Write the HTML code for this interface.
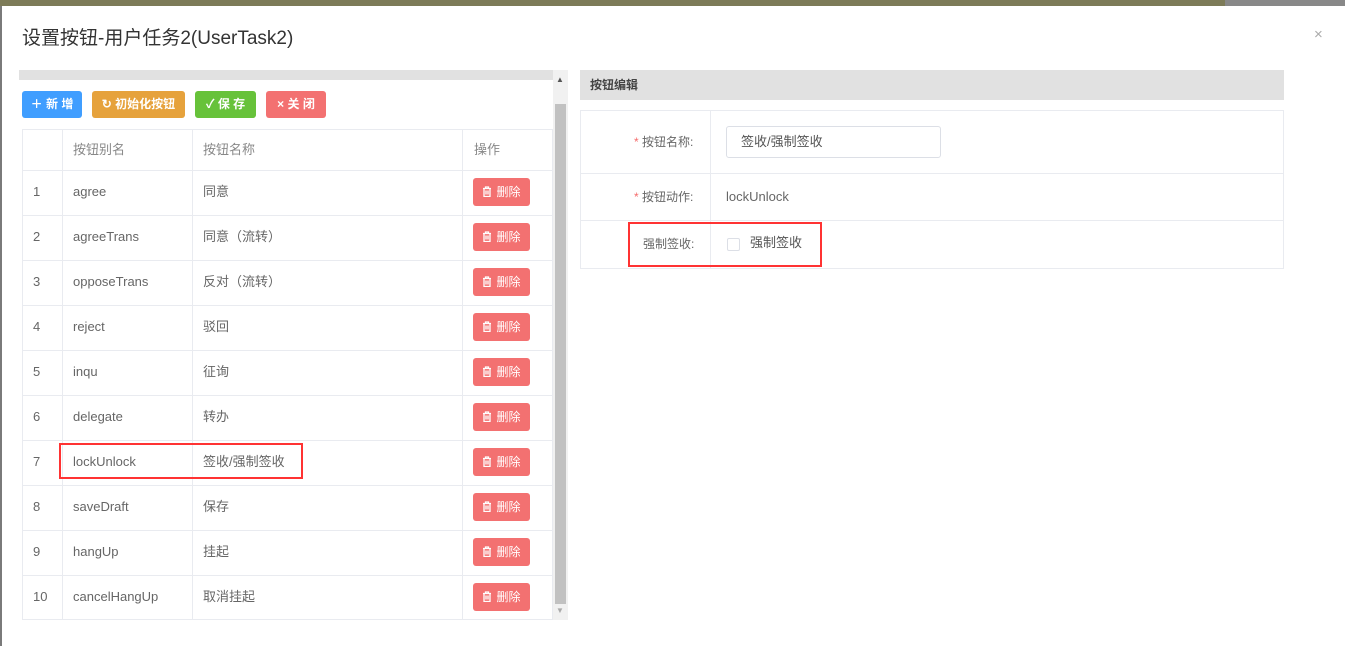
<!DOCTYPE html>
<html><head><meta charset="utf-8"><style>
*{margin:0;padding:0;box-sizing:border-box}
body{width:1345px;height:627px;overflow:hidden;background:#7a7a7a;font-family:"Liberation Sans","Noto Sans CJK SC",sans-serif;position:relative}
.a{position:absolute}
.modal{left:2px;top:6px;width:1343px;height:640px;background:#fff}
.t{font-size:13px;color:#666}
.c{position:absolute;font-size:13px;color:#666;height:45px;line-height:44px;white-space:nowrap}
.btn{position:absolute;top:91px;height:27px;border-radius:3px;color:#fff;font-size:12px;font-weight:bold;line-height:27px;text-align:center}
.del{position:absolute;left:473px;width:57px;height:28px;background:#f37171;border-radius:3px;color:#fff;font-size:12px;line-height:28px;text-align:center}
.hl{background:#e9ebf0}
.lb{position:absolute;font-size:12px;color:#666;line-height:16px}
</style></head><body>
<div class="a" style="left:0;top:0;width:1345px;height:6px;background:#7d7b58"></div>
<div class="a" style="left:1225px;top:0;width:120px;height:6px;background:#888"></div>
<div class="a modal"></div>
<div class="a" style="left:22px;top:26px;font-size:19px;color:#333;line-height:26px">设置按钮-用户任务2(UserTask2)</div>
<div class="a" style="left:1314px;top:26px;font-size:15px;color:#aaa">×</div>
<div class="a" style="left:19px;top:70px;width:534px;height:10px;background:#e1e1e1"></div>
<div class="a" style="left:553px;top:70px;width:15px;height:550px;background:#f1f1f1"></div>
<div class="a" style="left:555px;top:104px;width:11px;height:500px;background:#c1c1c1"></div>
<div class="a" style="left:556px;top:75px;font-size:8px;color:#555">▲</div>
<div class="a" style="left:556px;top:606px;font-size:8px;color:#aaa">▼</div>
<div class="btn" style="left:22px;width:60px;background:#409eff">＋ 新 增</div>
<div class="btn" style="left:92px;width:93px;background:#e6a23c">↻ 初始化按钮</div>
<div class="btn" style="left:195px;width:61px;background:#67c23a">✓ 保 存</div>
<div class="btn" style="left:266px;width:60px;background:#f37171">× 关 闭</div>
<div class="a" style="left:22px;top:129px;width:531px;height:491px;border:1px solid #e9ebf0"></div>
<div class="a hl" style="left:62px;top:130px;width:1px;height:490px"></div>
<div class="a hl" style="left:192px;top:130px;width:1px;height:490px"></div>
<div class="a hl" style="left:462px;top:130px;width:1px;height:490px"></div>
<div class="c" style="left:73px;top:128px;color:#888">按钮别名</div>
<div class="c" style="left:203px;top:128px;color:#888">按钮名称</div>
<div class="c" style="left:474px;top:128px;color:#888">操作</div>
<div id="rows"></div>
<script>
var d=[["agree","同意"],["agreeTrans","同意（流转）"],["opposeTrans","反对（流转）"],["reject","驳回"],["inqu","征询"],["delegate","转办"],["lockUnlock","签收/强制签收"],["saveDraft","保存"],["hangUp","挂起"],["cancelHangUp","取消挂起"]];
var h="";
var ic='<svg width="10" height="11" viewBox="0 0 10 11" style="vertical-align:-1px;margin-right:4px"><path d="M1 2.5h8M3.5 2.5V1h3v1.5M2 2.5v8h6v-8M4 4.5v4M6 4.5v4" stroke="#fff" stroke-width="1.3" fill="none"/></svg>';
for(var i=0;i<10;i++){var y=170+45*i;
h+='<div class="a hl" style="left:23px;top:'+y+'px;width:530px;height:1px"></div>';
h+='<div class="c" style="left:33px;top:'+y+'px">'+(i+1)+'</div>';
h+='<div class="c" style="left:73px;top:'+y+'px">'+d[i][0]+'</div>';
h+='<div class="c" style="left:203px;top:'+y+'px">'+d[i][1]+'</div>';
h+='<div class="del" style="top:'+(y+8)+'px">'+ic+'删除</div>';}
document.getElementById("rows").innerHTML=h;
</script>
<div class="a" style="left:59px;top:443px;width:244px;height:36px;border:2px solid #f33"></div>
<div class="a" style="left:580px;top:70px;width:704px;height:30px;background:#e1e1e1;font-size:12px;color:#444;font-weight:bold;padding:0 10px;line-height:30px">按钮编辑</div>
<div class="a" style="left:580px;top:110px;width:704px;height:159px;border:1px solid #e9ebf0"></div>
<div class="a hl" style="left:710px;top:110px;width:1px;height:158px"></div>
<div class="a hl" style="left:581px;top:173px;width:702px;height:1px"></div>
<div class="a hl" style="left:581px;top:220px;width:702px;height:1px"></div>
<div class="lb" style="left:634px;top:134px"><span style="color:#f56c6c">*</span> 按钮名称:</div>
<div class="a" style="left:726px;top:126px;width:215px;height:32px;border:1px solid #dcdfe6;border-radius:3px;font-size:13px;color:#555;padding:0 14px;line-height:30px">签收/强制签收</div>
<div class="lb" style="left:634px;top:189px"><span style="color:#f56c6c">*</span> 按钮动作:</div>
<div class="a" style="left:726px;top:189px;font-size:13px;color:#666;line-height:16px">lockUnlock</div>
<div class="lb" style="left:643px;top:236px">强制签收:</div>
<div class="a" style="left:727px;top:238px;width:13px;height:13px;border:1px solid #dcdfe6;border-radius:2px"></div>
<div class="a" style="left:750px;top:235px;font-size:13px;color:#555;line-height:16px">强制签收</div>
<div class="a" style="left:628px;top:222px;width:194px;height:45px;border:2px solid #f33"></div>
</body></html>
